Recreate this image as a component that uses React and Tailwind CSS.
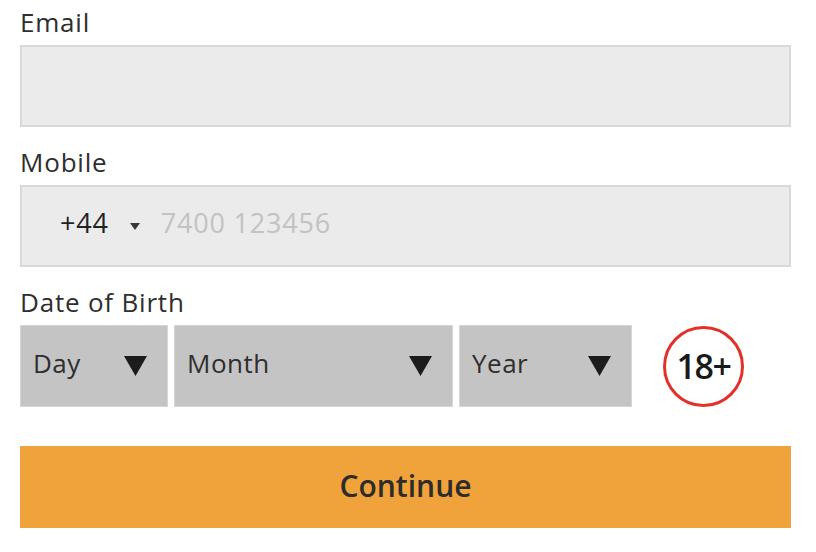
import React from 'react';

const Triangle = () => (
    <svg width="23" height="20" viewBox="0 0 23 20" className="shrink-0">
        <path d="M0 0 H23 L11.5 20 Z" fill="#1c1c1c" />
    </svg>
);

const SelectBox = ({ label, width }) => (
    <div className={`${width} h-[82px] bg-[#c4c4c4] border border-[#d6d6d6] flex items-center justify-between pl-[12px] pr-[20px]`}>
        <span className="text-[26px] tracking-[0.5px] text-[#2e2e2e] -mt-[5px]">{label}</span>
        <Triangle />
    </div>
);

const App = () => {
    return (
        <div className="w-[816px] h-[552px] bg-white font-['Open_Sans',sans-serif]">
            <div className="ml-[20px] w-[771px]">
                {/* Email */}
                <label className="block text-[26px] tracking-[0.8px] leading-[30px] pt-[7px] pb-[8px] text-[#2e2e2e]">Email</label>
                <div className="h-[82px] bg-[#ebebeb] border-2 border-[#d9d9d9]" />

                {/* Mobile */}
                <label className="block mt-[13px] text-[26px] tracking-[0.8px] leading-[30px] pt-[7px] pb-[8px] text-[#2e2e2e]">Mobile</label>
                <div className="h-[82px] bg-[#ebebeb] border-2 border-[#d9d9d9] flex items-center pl-[38px]">
                    <span className="text-[27px] tracking-[0.8px] text-[#222] -mt-[6px]">+44</span>
                    <svg width="10" height="7" viewBox="0 0 10 7" className="ml-[21px] mt-[1px]">
                        <path d="M0 0 H10 L5 7 Z" fill="#3a3a3a" />
                    </svg>
                    <span className="ml-[21px] text-[27px] tracking-[0.8px] text-[#c2c2c2] -mt-[6px]">7400 123456</span>
                </div>

                {/* Date of birth */}
                <label className="block mt-[13px] text-[26px] tracking-[0.8px] leading-[30px] pt-[7px] pb-[8px] text-[#2e2e2e]">Date of Birth</label>
                <div className="flex items-center">
                    <SelectBox label="Day" width="w-[148px]" />
                    <div className="ml-[6px]"><SelectBox label="Month" width="w-[279px]" /></div>
                    <div className="ml-[6px]"><SelectBox label="Year" width="w-[173px]" /></div>
                    <div className="ml-[31px] w-[81px] h-[81px] rounded-full border-[3px] border-[#e2312b] flex items-center justify-center">
                        <span className="text-[34px] font-semibold tracking-[-1.5px] text-[#1a1a1a]">18+</span>
                    </div>
                </div>

                <button className="mt-[39px] w-full h-[82px] bg-[#f0a33a] flex items-center justify-center">
                    <span className="text-[30px] font-semibold text-[#2c2c2c] -mt-[4px]">Continue</span>
                </button>
            </div>
        </div>
    );
};

export default App;
